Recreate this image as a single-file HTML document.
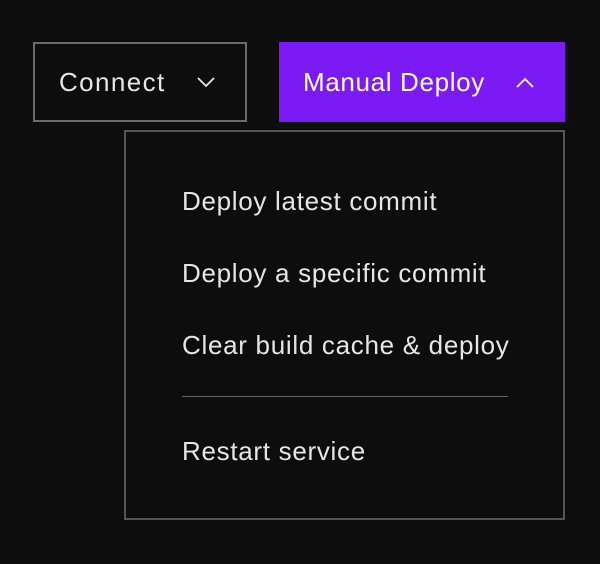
<!DOCTYPE html>
<html><head><style>
body{margin:0;width:600px;height:564px;background:#0d0d0d;font-family:"Liberation Sans",sans-serif;position:relative;overflow:hidden}
.b{position:absolute;box-sizing:border-box}
.t{position:absolute;font-size:26px;letter-spacing:0.7px;color:#e6e6e6;white-space:nowrap;line-height:1}
</style></head><body>
<div class="b" style="left:33px;top:42px;width:214px;height:80px;border:2px solid #6a6a6a"></div>
<div class="t" style="left:59px;top:69px;letter-spacing:1.4px">Connect</div>
<svg class="b" style="left:194px;top:72px" width="24" height="20"><path d="M4 6 L12 14 L20 6" stroke="#e6e6e6" stroke-width="1.8" fill="none"/></svg>
<div class="b" style="left:279px;top:42px;width:286px;height:80px;background:#7c1af5"></div>
<div class="t" style="left:303px;top:69px;color:#fff;letter-spacing:0.65px">Manual Deploy</div>
<svg class="b" style="left:513px;top:72px" width="24" height="20"><path d="M4 15 L12 7 L20 15" stroke="#fff" stroke-width="1.8" fill="none"/></svg>
<div class="b" style="left:124px;top:130px;width:441px;height:390px;border:2px solid #555"></div>
<div class="t" style="left:182px;top:188px">Deploy latest commit</div>
<div class="t" style="left:182px;top:260px">Deploy a specific commit</div>
<div class="t" style="left:182px;top:332px">Clear build cache &amp; deploy</div>
<div class="b" style="left:182px;top:396px;width:326px;height:1px;background:#666"></div>
<div class="t" style="left:182px;top:438px">Restart service</div>
</body></html>
